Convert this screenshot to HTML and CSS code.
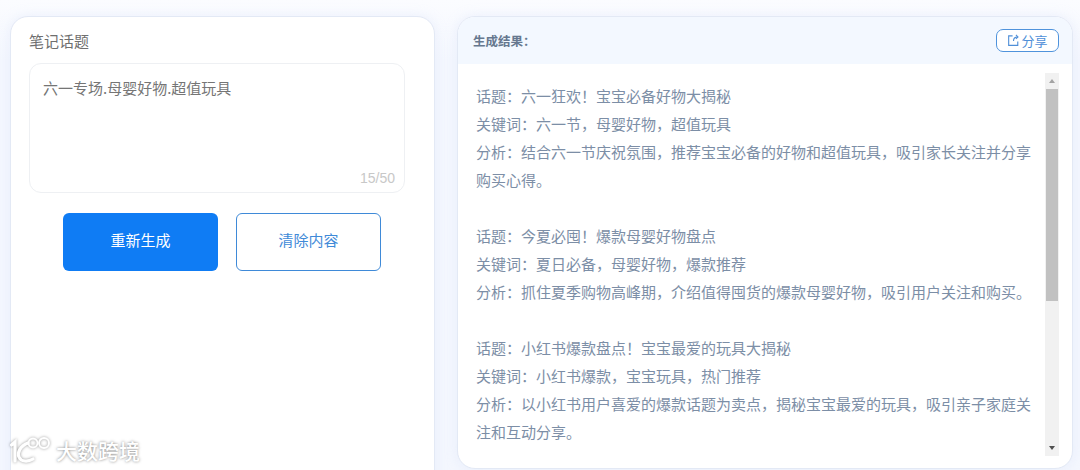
FILE: index.html
```html
<!DOCTYPE html>
<html lang="zh-CN">
<head>
<meta charset="utf-8">
<title>笔记话题</title>
<link rel="stylesheet" href="styles.css">
</head>
<body>
<main class="page">
  <section class="panel form-panel">
    <h2 class="label">笔记话题</h2>
    <div class="input-box">
      <div class="input-text">六一专场.母婴好物.超值玩具</div>
      <div class="counter">15/50</div>
    </div>
    <div class="actions">
      <button class="btn btn-primary">重新生成</button>
      <button class="btn btn-outline">清除内容</button>
    </div>
  </section>
  <section class="panel result-panel">
    <header class="result-head">
      <h2 class="result-title">生成结果：</h2>
      <button class="share">
        <svg class="share-icon" viewBox="0 0 14 14" width="13" height="13" fill="none" stroke="currentColor" stroke-width="1.2"><path d="M6 2H1.8v10.2H11.6V8"/><path d="M7 7.500c0-2.600 1.400-4.200 4.400-4.400"/><path d="M9.600 1l2.200 2.100-2.200 2.100"/></svg>
        <span>分享</span>
      </button>
    </header>
    <div class="result-body">
      <div class="result-text">
        <p>话题：六一狂欢！宝宝必备好物大揭秘</p>
        <p>关键词：六一节，母婴好物，超值玩具</p>
        <p>分析：结合六一节庆祝氛围，推荐宝宝必备的好物和超值玩具，吸引家长关注并分享购买心得。</p>
        <p class="gap">话题：今夏必囤！爆款母婴好物盘点</p>
        <p>关键词：夏日必备，母婴好物，爆款推荐</p>
        <p>分析：抓住夏季购物高峰期，介绍值得囤货的爆款母婴好物，吸引用户关注和购买。</p>
        <p class="gap">话题：小红书爆款盘点！宝宝最爱的玩具大揭秘</p>
        <p>关键词：小红书爆款，宝宝玩具，热门推荐</p>
        <p>分析：以小红书用户喜爱的爆款话题为卖点，揭秘宝宝最爱的玩具，吸引亲子家庭关注和互动分享。</p>
      </div>
      <div class="scrollbar">
        <span class="arrow arrow-up"></span>
        <div class="track"><div class="thumb"></div></div>
        <span class="arrow arrow-down"></span>
      </div>
    </div>
  </section>
</main>
<div class="watermark">
  <svg class="wm-logo" viewBox="0 0 42 30" width="42" height="30" fill="none" stroke="#fff" stroke-width="3.200" stroke-linecap="round"><path d="M2.500 10L6 7v19"/><path d="M19 8c-8 3-11 10-9 14 2 5 9 5 14 2"/><circle cx="24" cy="8" r="4.500" stroke-width="1.900"/><circle cx="35" cy="8" r="5" stroke-width="1.900"/></svg>
  <span class="wm-text">大数跨境</span>
</div>
</body>
</html>
```

FILE: styles.css
```css
* { box-sizing: border-box; margin: 0; padding: 0; }
html, body { width: 1080px; height: 470px; overflow: hidden; }
body {
  position: relative;
  background: linear-gradient(180deg, #fbfcff 0, #f4f7fe 60px);
  font-family: "Noto Sans CJK SC", "Liberation Sans", sans-serif;
  font-size: 15px;
}
.page {
  display: flex;
  align-items: flex-start;
  gap: 22px;
  padding: 16px 7px 0 10px;
  height: 470px;
  overflow: hidden;
}
.panel {
  background: #fff;
  border: 1px solid #e3e9f5;
  border-radius: 18px;
  box-shadow: 0 0 12px rgba(210, 222, 245, .35);
}
.form-panel {
  width: 425px;
  height: 480px;
  padding: 13px 29px 14px 18px;
  flex: none;
}
.label {
  font-size: 15px;
  font-weight: 400;
  line-height: 22px;
  color: #6f6f6f;
}
.input-box {
  display: flex;
  flex-direction: column;
  justify-content: space-between;
  height: 130px;
  margin-top: 11px;
  padding: 12px 9px 4px 13px;
  border: 1px solid #eef0f3;
  border-radius: 12px;
}
.input-text { line-height: 24px; color: #757575; }
.counter {
  align-self: flex-end;
  font-family: "Liberation Sans", sans-serif;
  font-size: 14px;
  line-height: 20px;
  color: #c8c8c8;
}
.actions {
  display: flex;
  gap: 18px;
  margin: 20px 0 0 34px;
}
.btn {
  height: 58px;
  padding-bottom: 5px;
  border-radius: 6px;
  font: inherit;
  font-size: 15px;
}
.btn-primary {
  width: 155px;
  border: 0;
  background: #0f7cf4;
  color: #fff;
}
.btn-outline {
  width: 145px;
  border: 1px solid #3f8ad8;
  background: #fff;
  color: #3f8ad8;
}
.result-panel {
  width: 616px;
  height: 453px;
  overflow: hidden;
}
.result-head {
  display: flex;
  align-items: center;
  justify-content: space-between;
  height: 47px;
  padding: 0 13px 0 15px;
  background: #f3f8ff;
}
.result-title {
  font-size: 12.500px;
  font-weight: 700;
  color: #66788f;
}
.share {
  display: flex;
  align-items: center;
  justify-content: center;
  gap: 1px;
  width: 63px;
  height: 23px;
  border: 1.300px solid #4f93dc;
  border-radius: 7px;
  background: #fff;
  color: #4f8fd8;
  font: inherit;
  font-size: 13px;
}
.share-icon { flex: none; }
.result-body {
  display: flex;
  justify-content: space-between;
  height: 405px;
  padding: 9px 13px 0 18px;
}
.result-text {
  width: 560px;
  height: 387px;
  padding-top: 9px;
  overflow: hidden;
  line-height: 28px;
  color: #7c8ea6;
}
.gap { margin-top: 28px; }
.scrollbar {
  display: flex;
  flex-direction: column;
  width: 14px;
  height: 383px;
  background: #f1f1f1;
}
.arrow {
  flex: none;
  display: flex;
  align-items: center;
  justify-content: center;
  height: 16px;
}
.arrow::before {
  content: "";
  border-left: 3.500px solid transparent;
  border-right: 3.500px solid transparent;
}
.arrow-up::before { border-bottom: 4px solid #a3a3a3; }
.arrow-down::before { border-top: 4px solid #505050; }
.track { flex: 1; padding: 0 1px; }
.thumb { height: 212px; background: #c1c1c1; }
.watermark {
  position: absolute;
  left: 9px;
  top: 435px;
  display: flex;
  align-items: center;
  gap: 5px;
}
.wm-logo { filter: drop-shadow(0 0 1.500px rgba(0, 0, 0, .4)); }
.wm-text {
  font-size: 21px;
  font-weight: 500;
  line-height: 30px;
  color: #fff;
  text-shadow: 0 0 3px rgba(0, 0, 0, .5);
}
```
